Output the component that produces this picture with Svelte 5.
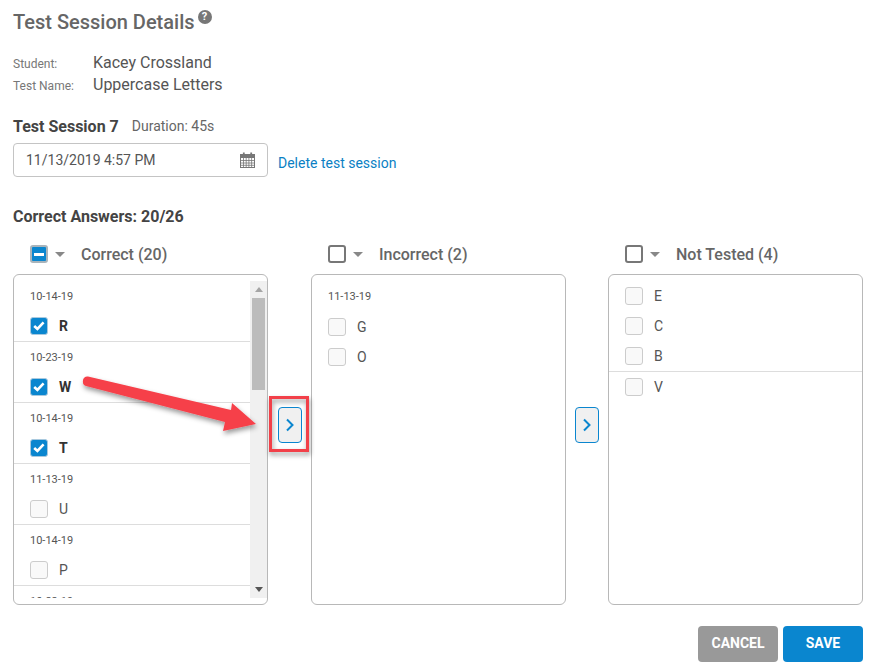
<script>
  // answers shown in the first column, grouped by test date
  const correct = [
    { date: '10-14-19', letter: 'R', checked: true },
    { date: '10-23-19', letter: 'W', checked: true },
    { date: '10-14-19', letter: 'T', checked: true },
    { date: '11-13-19', letter: 'U', checked: false },
    { date: '10-14-19', letter: 'P', checked: false },
    { date: '10-23-19', letter: 'K', checked: false }
  ];
</script>

<div class="page">
  <h1>Test Session Details<span class="help">?</span></h1>

  <div class="meta">
    <div class="meta-row"><span class="meta-label">Student:</span><span class="meta-value">Kacey Crossland</span></div>
    <div class="meta-row"><span class="meta-label">Test Name:</span><span class="meta-value">Uppercase Letters</span></div>
  </div>

  <div class="session"><strong>Test Session 7</strong><span>Duration: 45s</span></div>

  <div class="date-row">
    <div class="date-input">
      <span>11/13/2019 4:57 PM</span>
      <svg width="15" height="16" viewBox="0 0 15 16" fill="none" stroke="#777">
        <rect x="0.5" y="2.5" width="14" height="13" fill="#fff" />
        <rect x="0.5" y="2.5" width="14" height="3" fill="#777" />
        <path d="M0.5 8.5h14M0.5 11h14M0.5 13.3h14M3.5 5.5v10M6.2 5.5v10M8.9 5.5v10M11.6 5.5v10" stroke-width="0.8" />
        <path d="M3.8 0.5v3.5M11.2 0.5v3.5" stroke-width="1.8" />
      </svg>
    </div>
    <span class="link">Delete test session</span>
  </div>

  <div class="score">Correct Answers: 20/26</div>

  <div class="columns">
    <section class="column">
      <div class="col-head">
        <span class="head-box mixed"><i></i></span><span class="caret"></span><span>Correct (20)</span>
      </div>
      <div class="panel scrolling">
        <div class="list">
          {#each correct as item}
            <div class="dated">
              <div class="date">{item.date}</div>
              <div class="row">
                {#if item.checked}
                  <span class="box on">
                    <svg width="12" height="10" viewBox="0 0 12 10" fill="none" stroke="#fff" stroke-width="2.6"><path d="M1.2 5l3.2 3 6.2-6.6" /></svg>
                  </span>
                  <b>{item.letter}</b>
                {:else}
                  <span class="box"></span>
                  <span>{item.letter}</span>
                {/if}
              </div>
            </div>
          {/each}
        </div>
        <div class="track">
          <span class="arrow up"></span>
          <span class="thumb"></span>
          <span class="rest"></span>
          <span class="arrow down"></span>
        </div>
      </div>
    </section>

    <button class="move first" aria-label="Move to incorrect">
      <svg width="8" height="14" viewBox="0 0 8 14" fill="none" stroke="#0a86cf" stroke-width="2"><path d="M1 1.5l5.5 5.5-5.5 5.5" /></svg>
    </button>

    <section class="column">
      <div class="col-head">
        <span class="head-box"></span><span class="caret"></span><span>Incorrect (2)</span>
      </div>
      <div class="panel">
        <div class="date lone">11-13-19</div>
        <div class="row"><span class="box"></span><span>G</span></div>
        <div class="row"><span class="box"></span><span>O</span></div>
      </div>
    </section>

    <button class="move" aria-label="Move to not tested">
      <svg width="8" height="14" viewBox="0 0 8 14" fill="none" stroke="#0a86cf" stroke-width="2"><path d="M1 1.5l5.5 5.5-5.5 5.5" /></svg>
    </button>

    <section class="column">
      <div class="col-head">
        <span class="head-box"></span><span class="caret"></span><span>Not Tested (4)</span>
      </div>
      <div class="panel plain">
        <div class="row"><span class="box"></span><span>E</span></div>
        <div class="row"><span class="box"></span><span>C</span></div>
        <div class="row ruled"><span class="box"></span><span>B</span></div>
        <div class="row"><span class="box"></span><span>V</span></div>
      </div>
    </section>
  </div>

  <div class="actions">
    <button class="btn cancel">CANCEL</button>
    <button class="btn save">SAVE</button>
  </div>

  <!-- annotation drawn on top of the screenshot -->
  <svg class="callout" width="874" height="672" viewBox="0 0 874 672">
    <defs>
      <filter id="soft" x="-20%" y="-40%" width="140%" height="190%">
        <feDropShadow dx="1" dy="3" stdDeviation="2.5" flood-color="#000" flood-opacity="0.4" />
      </filter>
    </defs>
    <rect x="270.5" y="397.5" width="37" height="53" fill="none" stroke="#f2404a" stroke-width="3" filter="url(#soft)" />
    <path d="M88 376.5 L231 410 L232 403 L256 424 L223 431 L225 422 L86 386 Q82 385 83 380 Q84 376 88 376.5 Z" fill="#f6404a" filter="url(#soft)" />
  </svg>
</div>

<style>
  :global(body) { background: #fff; }
  .page { position: relative; width: 874px; height: 672px; box-sizing: border-box; padding: 11px 11px 0 13px; font-family: Roboto, sans-serif; color: #555; overflow: hidden; }
  h1 { margin: 0; font-size: 20px; line-height: 22px; font-weight: 500; color: #666; display: flex; align-items: flex-start; }
  .help { width: 14px; height: 14px; margin: -1px 0 0 3px; border-radius: 50%; background: #777; color: #fff; font-size: 11px; line-height: 14px; font-weight: 700; text-align: center; }
  .meta { margin-top: 18px; }
  .meta-row { display: flex; align-items: center; height: 22px; }
  .meta-label { width: 80px; font-size: 12px; color: #777; padding-top: 3px; }
  .meta-value { font-size: 16px; color: #555; }
  .session { margin-top: 21px; height: 20px; display: flex; align-items: center; gap: 13px; font-size: 14px; color: #666; }
  .session strong { font-size: 16px; font-weight: 700; color: #444; }
  .date-row { margin-top: 7px; display: flex; align-items: center; gap: 10px; }
  .date-input { width: 255px; height: 34px; box-sizing: border-box; border: 1px solid #c4c4c4; border-radius: 4px; padding: 0 12px 0 12px; display: flex; align-items: center; justify-content: space-between; font-size: 14px; color: #555; }
  .link { color: #0a7fc4; font-size: 14px; padding-top: 5px; }
  .score { margin-top: 30px; height: 20px; line-height: 20px; font-size: 16px; font-weight: 700; color: #444; }
  .columns { margin-top: 17px; display: flex; align-items: flex-start; }
  .column { width: 255px; flex: none; }
  .col-head { height: 20px; padding-left: 17px; display: flex; align-items: center; font-size: 16px; font-weight: 500; color: #666; margin-bottom: 10px; }
  .head-box { width: 18px; height: 18px; box-sizing: border-box; border: 2px solid #777; border-radius: 3px; display: flex; align-items: center; justify-content: center; }
  .head-box.mixed { background: #0a86cf; border-color: #a9b4bb; }
  .head-box.mixed i { width: 10px; height: 3px; background: #fff; }
  .caret { margin: 0 16px 0 7px; width: 0; height: 0; border: 5px solid transparent; border-top: 5px solid #888; border-bottom: 0; }
  .panel { height: 331px; box-sizing: border-box; border: 1px solid #b8b8b8; border-radius: 6px; overflow: hidden; }
  .panel.scrolling { display: flex; padding: 6px 0 6px; }
  .panel.plain { padding-top: 6px; }
  .list { flex: 1; overflow: hidden; }
  .dated { height: 61px; box-sizing: border-box; border-bottom: 1px solid #ddd; padding-top: 9px; }
  .date { font-size: 11px; line-height: 13px; color: #555; padding-left: 16px; }
  .date.lone { padding-top: 15px; }
  .dated .row { margin-top: 8px; }
  .date.lone + .row { margin-top: 9px; }
  .row { height: 30px; padding-left: 16px; display: flex; align-items: center; gap: 11px; font-size: 14px; color: #555; }
  .row.ruled { border-bottom: 1px solid #ddd; }
  .row b { font-weight: 700; color: #333; }
  .box { width: 18px; height: 18px; flex: none; box-sizing: border-box; border: 1px solid #ccc; border-radius: 3px; background: #f9f9f9; display: flex; align-items: center; justify-content: center; }
  .box.on { background: #0a86cf; border-color: #a9c9de; }
  .track { width: 17px; flex: none; background: #f0f0f0; display: flex; flex-direction: column; align-items: center; }
  .arrow { width: 0; height: 0; border: 4px solid transparent; flex: none; }
  .arrow.up { margin-top: 6px; border-top: 0; border-bottom: 5px solid #a5a5a5; }
  .arrow.down { margin-bottom: 6px; border-bottom: 0; border-top: 5px solid #555; }
  .thumb { width: 13px; height: 92px; margin-top: 6px; background: #bcbcbc; flex: none; }
  .rest { flex: 1; }
  .move { width: 24px; height: 36px; flex: none; margin: 163px 9px 0 9px; padding: 0; box-sizing: border-box; border: 1px solid #0a86cf; border-radius: 4px; background: #f0f0f0; display: flex; align-items: center; justify-content: center; }
  .move.first { margin-left: 10px; }
  .actions { margin-top: 21px; display: flex; justify-content: flex-end; gap: 5px; }
  .btn { width: 80px; height: 36px; border: none; border-radius: 4px; color: #fff; font-family: Roboto, sans-serif; font-size: 14px; font-weight: 700; padding: 0 0 2px; }
  .cancel { background: #999; }
  .save { background: #0a86cf; }
  .callout { position: absolute; left: 0; top: 0; pointer-events: none; }
</style>
